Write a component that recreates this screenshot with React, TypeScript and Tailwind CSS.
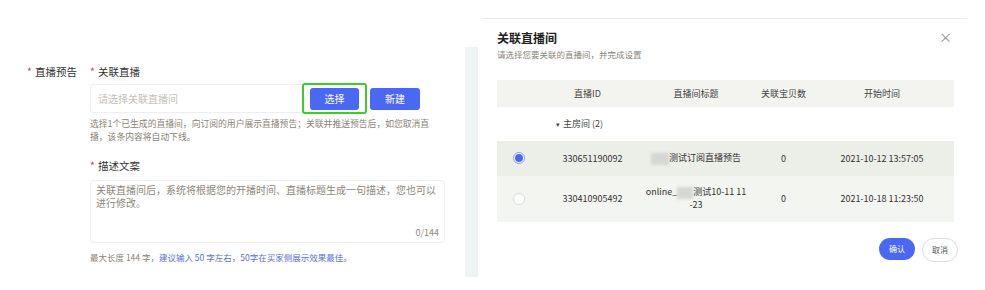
import React from "react";

const font = {
  fontFamily: '"Noto Sans CJK SC", "Noto Sans", sans-serif',
};

interface LiveRoom {
  id: string;
  title: React.ReactNode;
  count: number;
  start: string;
  selected: boolean;
}

const Blur: React.FC<{ w: string }> = ({ w }) => (
  <span
    className={`inline-block h-[12px] align-middle bg-[#d6d6d2] blur-[1.5px] ${w}`}
  />
);

const rooms: LiveRoom[] = [
  {
    id: "330651190092",
    title: (
      <span>
        <Blur w="w-[18px]" />
        测试订阅直播预告
      </span>
    ),
    count: 0,
    start: "2021-10-12 13:57:05",
    selected: true,
  },
  {
    id: "330410905492",
    title: (
      <span>
        online_
        <Blur w="w-[16px]" />
        测试10-11 11
        <br />
        -23
      </span>
    ),
    count: 0,
    start: "2021-10-18 11:23:50",
    selected: false,
  },
];

const LeftForm: React.FC = () => (
  <div className="w-[465px] shrink-0 pt-[64px] flex text-[10px]">
    <div className="w-[90px] shrink-0 flex justify-end pr-[13px]">
      <span className="text-[10.5px] text-[#333] leading-[16px]">
        <span className="text-[#e0454a] mr-[3px]">*</span>直播预告
      </span>
    </div>
    <div className="w-[356px]">
      <div className="text-[10.5px] text-[#333] leading-[16px]">
        <span className="text-[#e0454a] mr-[3px]">*</span>关联直播
      </div>
      <div className="mt-[4px] flex items-center h-[29px]">
        <div className="w-[214px] h-[29px] border border-[#eeeeee] rounded-[3px] flex items-center px-[7px] text-[#c4c0b8]">
          请选择关联直播间
        </div>
        <div className="-ml-[2px] w-[65px] h-[31px] border-2 border-[#3ecb2e] rounded-[3px] flex items-center justify-center">
          <button className="w-[49px] h-[22px] bg-[#4a68f2] text-white rounded-[3px] text-[10px]">
            选择
          </button>
        </div>
        <button className="ml-[3px] w-[50px] h-[22px] bg-[#4a68f2] text-white rounded-[3px] text-[10px]">
          新建
        </button>
      </div>
      <p className="mt-[4px] w-[350px] text-[8.8px] leading-[13px] text-[#8a8378]">
        选择1个已生成的直播间，向订阅的用户展示直播预告；关联并推送预告后，如您取消直
        <br />
        播，该条内容将自动下线。
      </p>
      <div className="mt-[15px] text-[10.5px] text-[#333] leading-[16px]">
        <span className="text-[#e0454a] mr-[3px]">*</span>描述文案
      </div>
      <div className="mt-[6px] w-[355px] h-[63px] border border-[#eeeeee] rounded-[4px] px-[5px] pt-[2px] flex flex-col">
        <p className="text-[10px] leading-[13px] text-[#8e877c] w-[344px]">
          关联直播间后，系统将根据您的开播时间、直播标题生成一句描述，您也可以进行修改。
        </p>
        <div className="mt-auto mb-[3px] text-right text-[9px] text-[#8e877c]">
          0/144
        </div>
      </div>
      <p className="mt-[8px] text-[8.5px] text-[#8a8378]">
        最大长度 144 字，
        <span className="text-[#5a6fd8]">
          建议输入 50 字左右，50字在买家侧展示效果最佳。
        </span>
      </p>
    </div>
  </div>
);

const Divider: React.FC = () => (
  <div className="w-[13px] shrink-0 mt-[47px] h-[230px] bg-[#eef3f3]" />
);

const RoomModal: React.FC = () => (
  <div className="ml-[4px] mt-[18px] w-[485px] h-[260px] border-t border-[#ececec] px-[15px] pt-[10px] text-[9px] text-[#333]">
    <div className="flex items-start justify-between">
      <div>
        <h2 className="text-[12px] font-bold leading-[17px] text-[#222]">
          关联直播间
        </h2>
        <p className="mt-[2px] text-[8.5px] text-[#8a8378]">
          请选择您要关联的直播间，并完成设置
        </p>
      </div>
      <span className="mt-[1px] text-[13px] leading-[13px] text-[#888]">
        ×
      </span>
    </div>

    <div className="mt-[19px] w-[457px]">
      <div className="flex h-[27px] items-center bg-[#f3f4f0] text-[#444]">
        <div className="w-[43px]" />
        <div className="w-[95px] text-center">直播ID</div>
        <div className="w-[122px] text-center">直播间标题</div>
        <div className="w-[53px] text-center">关联宝贝数</div>
        <div className="w-[144px] text-center">开始时间</div>
      </div>
      <div className="h-[34px] flex items-center pl-[59px] text-[#444]">
        <span className="text-[7px] mr-[3px]">▾</span>主房间 (2)
      </div>
      {rooms.map((room, index) => (
        <div
          key={index}
          className={`flex items-center text-[#333] ${
            room.selected
              ? "h-[35px] bg-[#eceee8]"
              : "h-[46px] bg-[#f3f5f0]"
          }`}
        >
          <div className="w-[43px] flex justify-center">
            {room.selected ? (
              <span className="w-[12px] h-[12px] rounded-full border border-[#8aa0f7] bg-white flex items-center justify-center">
                <span className="w-[8px] h-[8px] rounded-full bg-[#4a68f2]" />
              </span>
            ) : (
              <span className="w-[12px] h-[12px] rounded-full border border-[#dcdcdc] bg-white" />
            )}
          </div>
          <div className="w-[95px] pl-[10px] text-center">{room.id}</div>
          <div className="w-[122px] text-center leading-[12px]">
            {room.title}
          </div>
          <div className="w-[53px] text-center">{room.count}</div>
          <div className="w-[144px] text-center">{room.start}</div>
        </div>
      ))}
      <div className="mt-[16px] flex justify-end gap-[7px]">
        <button className="w-[36px] h-[22px] rounded-full bg-[#4a68f2] text-white text-[8px]">
          确认
        </button>
        <button className="w-[36px] h-[24px] rounded-full border border-[#dcdcdc] bg-white text-[#555] text-[8px] -mr-[4px]">
          取消
        </button>
      </div>
    </div>
  </div>
);

export default function App() {
  return (
    <div
      className="w-[985px] h-[290px] bg-white flex overflow-hidden"
      style={font}
    >
      <LeftForm />
      <Divider />
      <RoomModal />
    </div>
  );
}
